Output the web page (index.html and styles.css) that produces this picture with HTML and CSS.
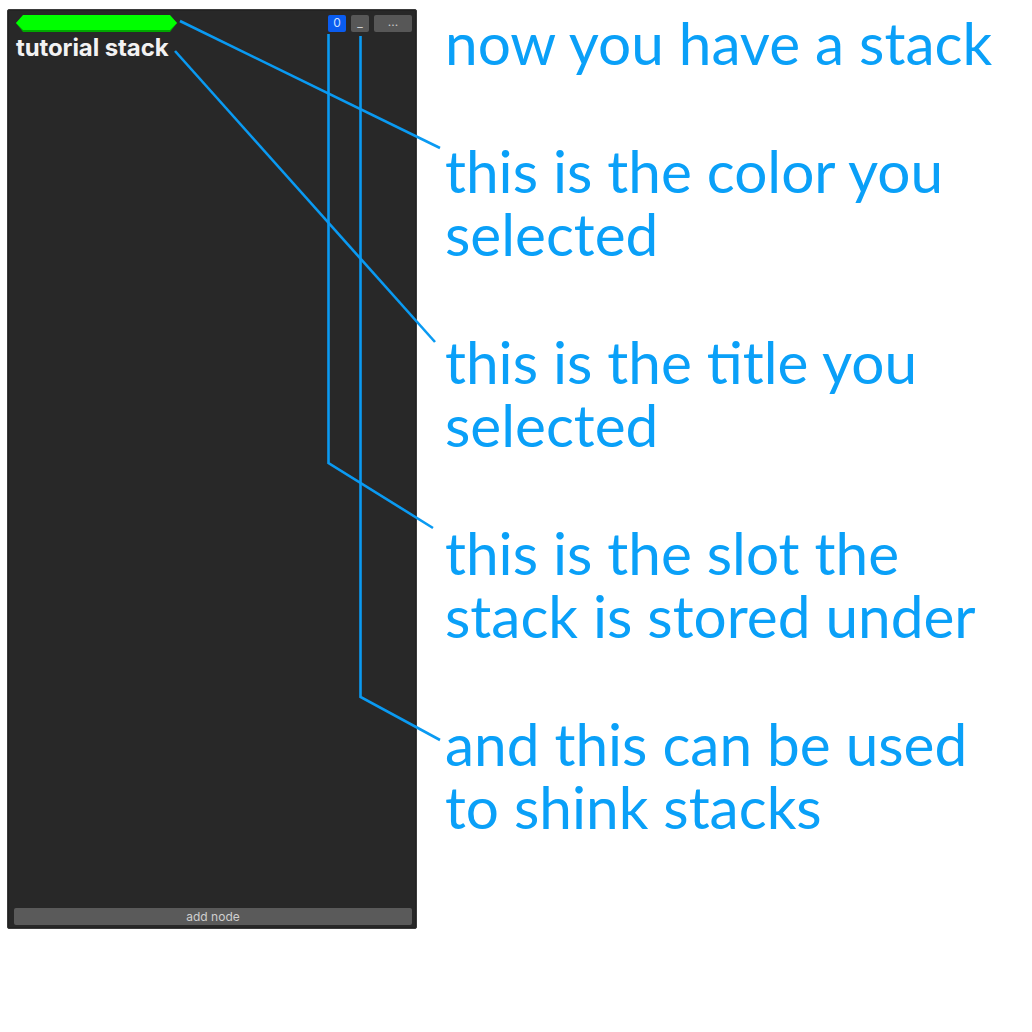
FILE: index.html
```html
<!DOCTYPE html>
<html>
<head>
<meta charset="utf-8">
<link rel="stylesheet" href="styles.css">
</head>
<body>
<div class="page">
  <div class="panel">
    <div class="header">
      <div class="left">
        <svg class="colorbar" width="161" height="19" viewBox="0 0 161 19">
          <polygon points="0,8 7,1 154,1 161,8 154,17 7,17" fill="#00a800"/>
          <polygon points="0,8 7,0 154,0 161,8 154,15 7,15" fill="#00ff00"/>
        </svg>
        <div class="title">tutorial stack</div>
      </div>
      <div class="btns">
        <div class="btn slot">0</div>
        <div class="btn min">_</div>
        <div class="btn more">...</div>
      </div>
    </div>
    <div class="body"></div>
    <div class="addnode">add node</div>
  </div>
  <div class="notes">
    <p>now you have a stack</p>
    <p>this is the color you<br>selected</p>
    <p>this is the title you<br>selected</p>
    <p>this is the slot the<br>stack is stored under</p>
    <p>and this can be used<br>to shink stacks</p>
  </div>
  <svg class="lines" width="1032" height="1032" viewBox="0 0 1032 1032">
    <g stroke="#0a9af2" stroke-width="2.6" fill="none" stroke-linejoin="miter">
      <polyline points="180,21 440,148"/>
      <polyline points="175,51 435,342"/>
      <polyline points="328.5,34 328.5,463 433,528"/>
      <polyline points="360.5,36 360.5,697 440,740"/>
    </g>
  </svg>
</div>
</body>
</html>
```
FILE: styles.css
```css
html, body {
  margin: 0;
  padding: 0;
  background: #ffffff;
}
.page {
  position: relative;
  width: 1032px;
  height: 1032px;
  display: flex;
  align-items: flex-start;
}
.panel {
  margin: 9px 0 0 7px;
  width: 410px;
  height: 920px;
  box-sizing: border-box;
  background: #282828;
  border: 1px solid #3b3b3b;
  box-shadow: inset 0 0 0 1px #222;
  border-radius: 2px;
  display: flex;
  flex-direction: column;
  padding: 5px 4px 3px 6px;
  font-family: Inter, "Liberation Sans", sans-serif;
}
.header {
  display: flex;
  justify-content: space-between;
  align-items: flex-start;
}
.left {
  display: flex;
  flex-direction: column;
}
.colorbar {
  display: block;
  margin-left: 2px;
}
.title {
  color: #f2f2f2;
  font-weight: 700;
  font-size: 24px;
  line-height: 24px;
  margin-top: 2px;
  margin-left: 2px;
  letter-spacing: -0.1px;
}
.btns {
  display: flex;
  gap: 5px;
  margin-top: 0;
}
.btn {
  height: 17px;
  border-radius: 2px;
  background: #575757;
  color: #d0d0d0;
  font-size: 12px;
  line-height: 16px;
  text-align: center;
  width: 18px;
}
.btn.slot {
  background: #0a5cf0;
  color: #cfe0ff;
}
.btn.more {
  width: 38px;
  line-height: 14px;
  color: #c8c8c8;
}
.body {
  flex: 1;
}
.addnode {
  height: 17px;
  background: #5a5a5a;
  border-radius: 2px;
  color: #cfcfcf;
  font-size: 12px;
  line-height: 17px;
  text-align: center;
  margin-left: 0;
}
.notes {
  margin-left: 28px;
  margin-top: 11px;
  display: flex;
  flex-direction: column;
  gap: 64px;
  font-family: Lato, "Open Sans", sans-serif;
  color: #0aa0f8;
  font-size: 58.5px;
  line-height: 63.5px;
}
.notes p {
  margin: 0;
  white-space: nowrap;
}
.lines {
  position: absolute;
  left: 0;
  top: 0;
  pointer-events: none;
}
```
